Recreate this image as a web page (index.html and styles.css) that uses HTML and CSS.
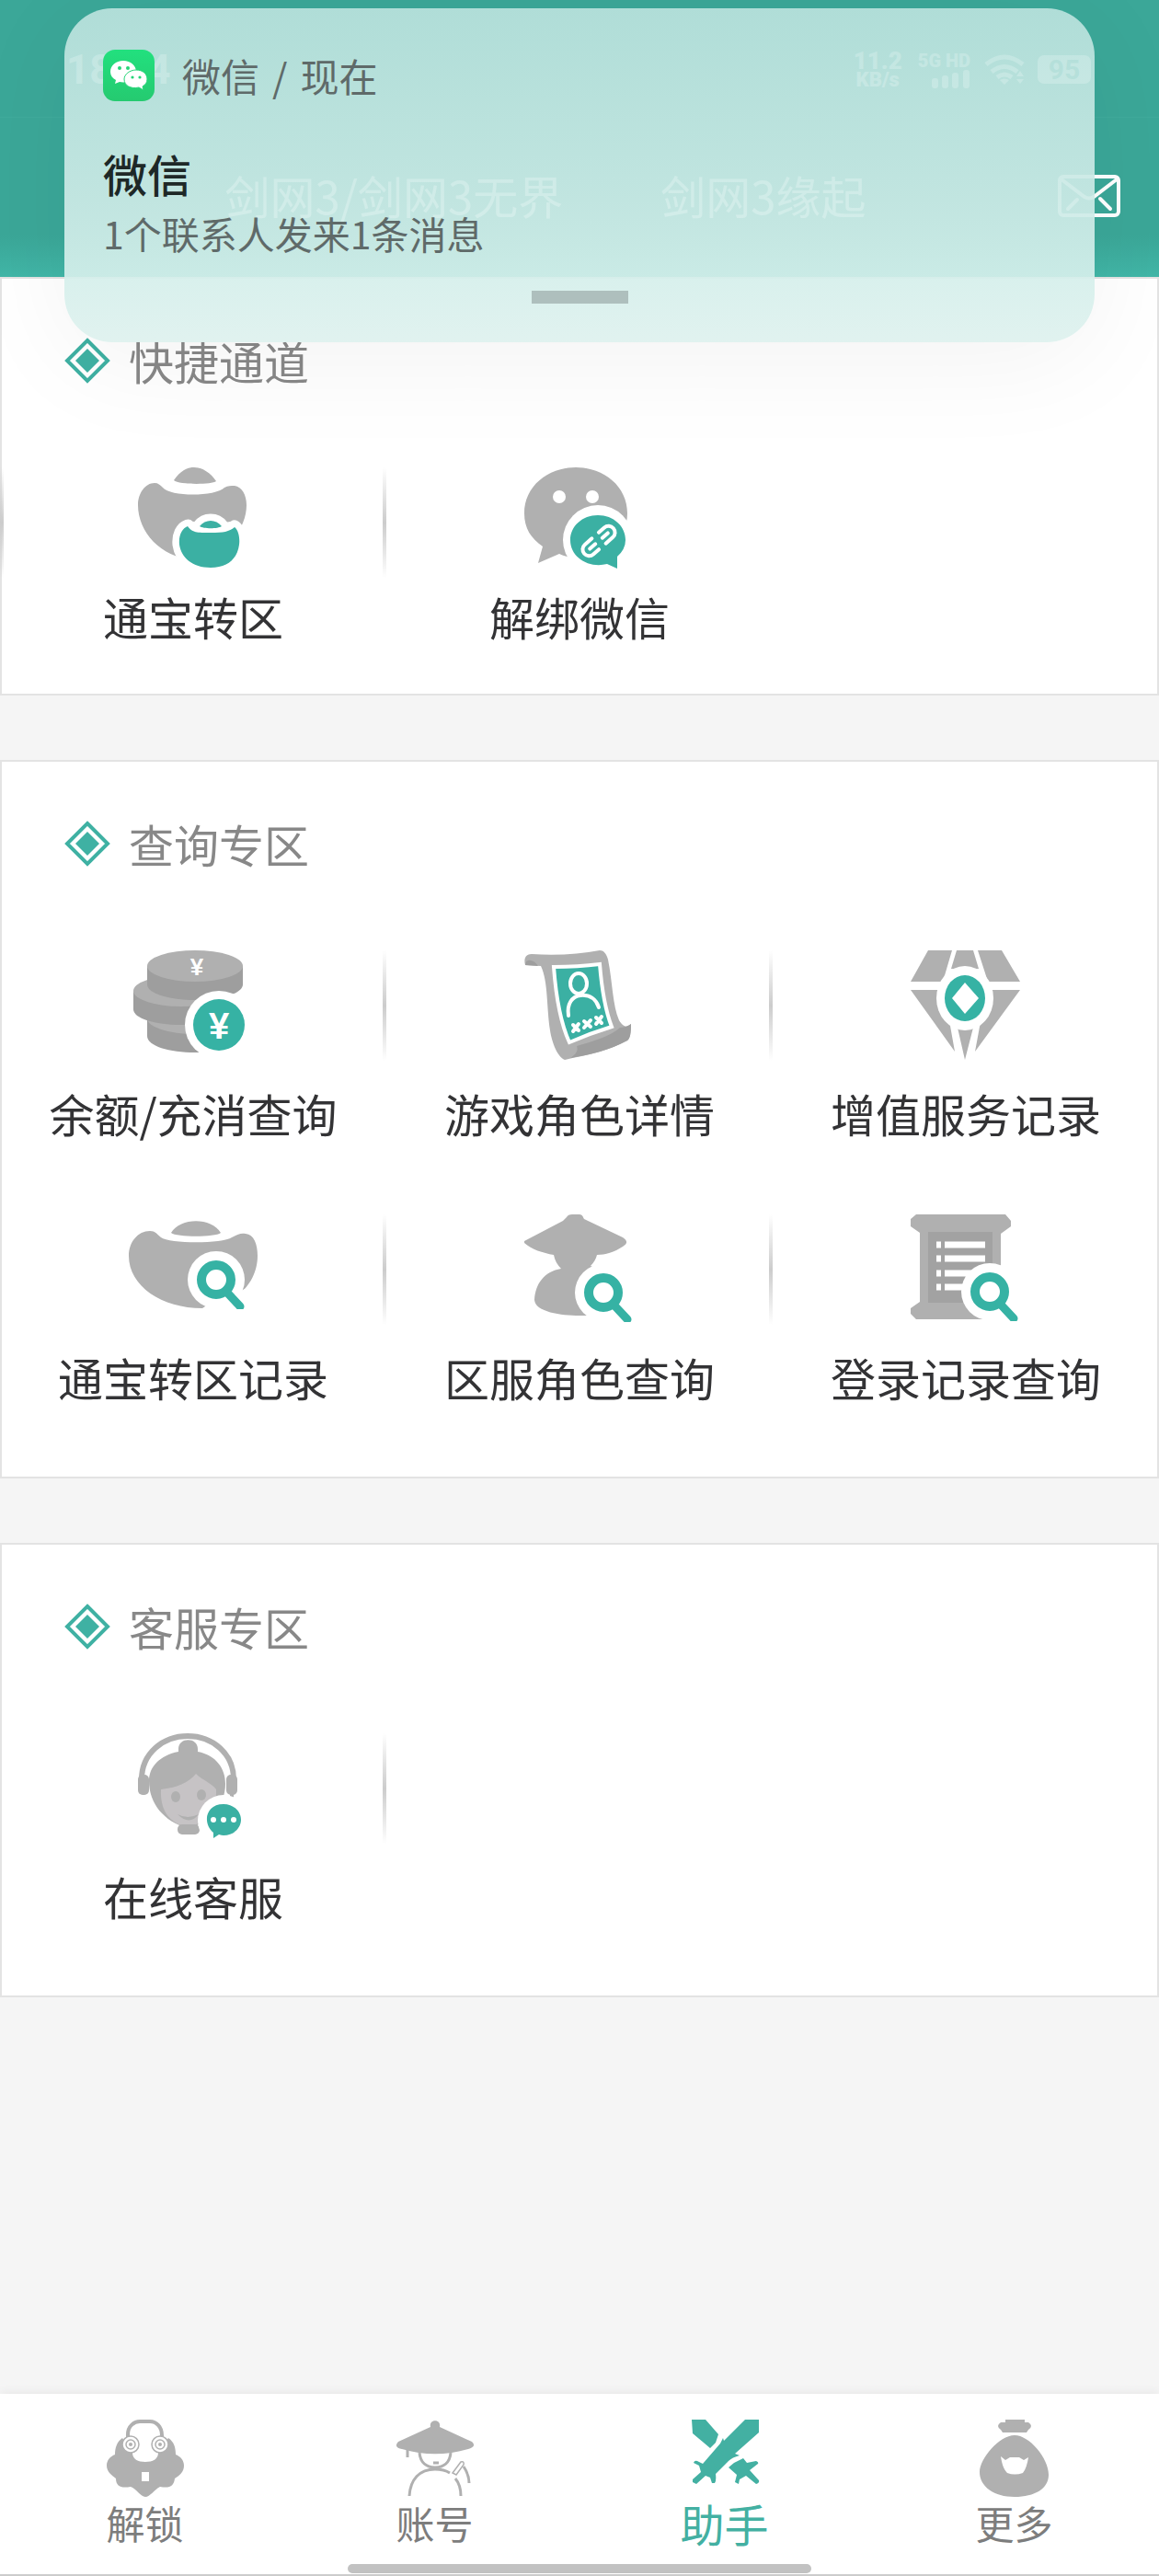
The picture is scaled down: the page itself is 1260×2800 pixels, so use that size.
FILE: index.html
```html
<!DOCTYPE html>
<html lang="zh-CN">
<head>
<meta charset="utf-8">
<meta name="viewport" content="width=device-width, initial-scale=1">
<title>助手</title>
<link rel="stylesheet" href="styles.css">
</head>
<body>
<svg class="defs" width="0" height="0" aria-hidden="true">
  <symbol id="bullet" viewBox="0 0 50 50">
    <path d="M25 3 47 25 25 47 3 25Z" fill="#fff" stroke="#3fb1a3" stroke-width="4"/>
    <path d="M25 12 38 25 25 38 12 25Z" fill="#3fb1a3"/>
  </symbol>
  <symbol id="magnifier" viewBox="0 0 64 64">
    <circle cx="32" cy="32" r="31" fill="#fff"/>
    <path d="M42 44 58 61" stroke="#fff" stroke-width="14"/>
    <circle cx="32" cy="32" r="16" fill="#fff" stroke="#36b2a4" stroke-width="10"/>
    <path d="M43 45 58 61" stroke="#36b2a4" stroke-width="9" stroke-linecap="round"/>
  </symbol>
</svg>

<header class="top">
  <div class="status">
    <span class="clock">18:04</span>
    <span class="status-dot"></span>
    <span class="speed"><b>11.2</b><b class="unit">KB/s</b></span>
    <span class="cell-net">
      <b>5G HD</b>
      <svg width="42" height="20" viewBox="0 0 42 20" fill="#fff"><rect x="0" y="9" width="7" height="11" rx="3"/><rect x="11" y="6" width="7" height="14" rx="3"/><rect x="22" y="3" width="7" height="17" rx="3"/><rect x="34" y="0" width="7" height="20" rx="3"/></svg>
    </span>
    <svg class="wifi" width="44" height="34" viewBox="0 0 44 34" fill="none" stroke="#fff" stroke-width="5"><path d="M2 11Q22-5 42 11M8 19Q22 8 36 19M14 25Q22 19 30 25"/><path d="M22 33 17 28Q22 25 27 28ZM39 18 43 24H35ZM39 32 43 27H35Z" fill="#fff" stroke="none"/></svg>
    <span class="battery">95</span>
  </div>
  <div class="bar">
    <nav class="tabs">
      <a class="tab current" href="#jx3">剑网3/剑网3无界</a>
      <a class="tab" href="#origin">剑网3缘起</a>
    </nav>
    <button class="mail" type="button" aria-label="消息">
      <svg width="68" height="46" viewBox="0 0 68 46" fill="none" stroke="#fff" stroke-width="4" stroke-linecap="round"><rect x="2" y="2" width="64" height="42" rx="4"/><path d="M4 5 29 24Q34 27 39 24L64 5M21 27 11 37M46 26 57 37"/></svg>
    </button>
  </div>
</header>

<aside class="notice">
  <div class="notice-app">
    <svg width="56" height="56" viewBox="0 0 56 56">
      <defs><linearGradient id="wx" x1="0" y1="0" x2="0" y2="1"><stop offset="0" stop-color="#22e07e"/><stop offset="1" stop-color="#25ca70"/></linearGradient></defs>
      <rect width="56" height="56" rx="13" fill="url(#wx)"/>
      <path d="M22 12C14 12 8 17 8 24C8 28 10 31 14 33L13 37 18 35C27 37 36 32 36 24C36 17 30 12 22 12Z" fill="#fff"/>
      <path d="M36 22C29 22 23 27 23 32C23 39 30 43 39 41L44 44 43 40C46 38 48 36 48 32C48 26 43 22 36 22Z" fill="#fff" stroke="#24d577"/>
      <g fill="#24d577"><circle cx="18" cy="20" r="2"/><circle cx="27" cy="20" r="2"/><circle cx="32" cy="30" r="1.6"/><circle cx="40" cy="30" r="1.6"/></g>
    </svg>
    <div class="source"><span>微信</span><span>/</span><span>现在</span></div>
  </div>
  <h2 class="notice-title">微信</h2>
  <p class="notice-text">1个联系人发来1条消息</p>
  <div class="handle"></div>
</aside>

<main>
  <section class="panel shortcuts">
    <h2 class="panel-title"><svg width="50" height="50"><use href="#bullet"/></svg>快捷通道</h2>
    <div class="grid">
      <a class="item" href="#transfer">
        <svg width="120" height="110" viewBox="0 0 120 110">
          <path fill="#b0b0b0" d="M39 14C46 4 53 0 61 0C70 0 79 6 85 15C80 19 44 19 39 14ZM18 17C22 17 24 19 27 22C35 32 84 32 94 22C98 20 101 20 105 20C113 21 118 30 118 41C118 70 90 100 59 100C25 98 0 70 0 41C0 28 8 17 18 17Z"/>
          <path fill="#fff" stroke="#fff" stroke-width="15" stroke-linejoin="round" d="M67 64C73 56 85 56 91 64ZM54 64C58 70 99 69 105 65C109 68 111 76 110 84C108 99 98 109 79 109C59 109 47 98 45 84C44 74 48 66 54 64Z"/>
          <path fill="#3bb0a3" d="M67 64C73 56 85 56 91 64C87 67 71 67 67 64ZM54 64C59 71 64 71 79 71C93 71 99 70 105 65C109 68 111 76 110 84C108 99 98 109 79 109C59 109 47 98 45 84C44 74 48 66 54 64Z"/>
        </svg>
        <span>通宝转区</span>
      </a>
      <a class="item" href="#unbind">
        <svg width="120" height="110" viewBox="0 0 120 110">
          <path fill="#b0b0b0" d="M56 0C87 0 112 21 112 50C112 78 87 98 56 98Q46 98 38 94L15 104 20 86C7 77 0 66 0 50C0 21 25 0 56 0Z"/>
          <circle cx="38" cy="32" r="7" fill="#fff"/><circle cx="74" cy="32" r="7" fill="#fff"/>
          <circle cx="80" cy="79" r="38" fill="#fff"/>
          <path fill="#3bb0a3" d="M80 52C97 52 110 64 110 79Q110 89 101 97L101 110 90 105C70 110 50 98 50 79C50 64 63 52 80 52Z"/>
          <g transform="translate(81 80) rotate(-41)" fill="none" stroke="#fff" stroke-width="4" stroke-linecap="round"><path d="M-4-7H-14A7 7 0 0 0-14 7H-6M4 7H14A7 7 0 0 0 14-7H6M-13 0H-5M5 0H13"/></g>
        </svg>
        <span>解绑微信</span>
      </a>
    </div>
  </section>

  <section class="panel">
    <h2 class="panel-title"><svg width="50" height="50"><use href="#bullet"/></svg>查询专区</h2>
    <div class="grid">
      <a class="item" href="#balance">
        <svg width="140" height="120" viewBox="0 0 140 120">
          <path fill="#9e9e9e" d="M20 74V93C20 104 44 111 72 111S124 104 124 93V74Z"/><ellipse cx="72" cy="74" rx="52" ry="17" fill="#b0b0b0"/>
          <path fill="#9e9e9e" d="M5 44V64C5 74 28 81 57 81S109 74 109 64V44Z"/><ellipse cx="57" cy="44" rx="52" ry="17" fill="#b0b0b0"/>
          <path fill="#9e9e9e" d="M20 17V37C20 47 44 54 72 54S124 47 124 37V17Z"/><ellipse cx="72" cy="17" rx="52" ry="17" fill="#b0b0b0"/>
          <circle cx="98" cy="81" r="37" fill="#fff"/><circle cx="98" cy="81" r="28" fill="#36b2a4"/>
          <text class="yen" x="74" y="27" font-size="26">¥</text><text class="yen" x="98" y="96" font-size="40">¥</text>
          <path fill="#fff" d="M74 118 100 109H130V118Z"/>
        </svg>
        <span>余额/充消查询</span>
      </a>
      <a class="item" href="#role">
        <svg width="140" height="120" viewBox="0 0 140 120">
          <path fill="#b0b0b0" d="M11 16C9 8 12 4 18 4C45 6 70 4 92 0C96 0 99 3 101 10C106 35 106 60 113 76C118 84 122 84 126 80C126 90 125 96 122 98C100 110 80 113 54 119C46 116 40 100 38 87C34 60 36 34 28 17Z"/>
          <path fill="#9e9e9e" d="M11 16C11 9 20 9 25 17ZM67 104C85 99 104 93 114 84Q120 84 126 80C126 90 125 96 122 98C102 109 82 113 60 117C66 113 69 109 67 104Z"/>
          <path fill="#3bb0a3" stroke="#fff" stroke-width="4" d="M42 18Q68 18 92 15C94 40 98 65 105 83Q82 90 59 100C48 76 44 45 42 18Z"/>
          <g fill="none" stroke="#fff" stroke-width="4" stroke-linecap="round"><ellipse cx="69" cy="36" rx="9" ry="11"/><path d="M58 71C56 58 62 50 71 49C81 48 88 53 91 62"/><path d="M63 81 69 87M69 80 63 88M75 77 82 83M82 76 75 84M88 73 94 79M94 72 88 80"/></g>
        </svg>
        <span>游戏角色详情</span>
      </a>
      <a class="item" href="#value-added">
        <svg width="140" height="120" viewBox="0 0 140 120">
          <path fill="#b0b0b0" d="M29 0H55L45 34H10ZM60 0H78L84 20H54ZM83 0H109L129 34H94ZM10 43H42L53 82 58 110ZM129 43H97L85 83 80 110ZM61 84H78L69 119Z"/>
          <ellipse cx="69" cy="52" rx="31" ry="35" fill="#fff"/><ellipse cx="69" cy="52" rx="22" ry="25" fill="#36b2a4"/>
          <path fill="#fff" d="M69 35 84 52 69 69 55 52Z"/>
        </svg>
        <span>增值服务记录</span>
      </a>
      <a class="item" href="#transfer-log">
        <svg width="140" height="120" viewBox="0 0 140 120">
          <path fill="#b0b0b0" d="M46 20C56 3 90 3 100 20C94 25 52 25 46 20ZM23 18C29 18 30 21 35 25C44 32 102 32 112 25C118 22 121 20 127 21C136 22 140 32 140 45C140 78 110 102 80 102C36 102 0 78 0 45C0 30 10 18 23 18Z"/>
          <path fill="#fff" d="M95 92 122 83 140 74V120H80V102Z"/>
          <use href="#magnifier" x="63" y="39" width="64" height="64"/>
        </svg>
        <span>通宝转区记录</span>
      </a>
      <a class="item" href="#server-role">
        <svg width="140" height="120" viewBox="0 0 140 120">
          <path fill="#b0b0b0" d="M56 3C57 1 59 0 62 0H70C73 0 74 3 75 5L117 25C123 29 122 32 117 35C108 41 98 44 89 44C88 48 86 52 82 56C96 60 90 75 90 110H70C50 110 22 106 21 93C22 75 32 62 50 59C46 55 43 50 42 44C30 42 18 38 10 31V29L52 7Z"/>
          <use href="#magnifier" x="64" y="53" width="64" height="64"/>
        </svg>
        <span>区服角色查询</span>
      </a>
      <a class="item" href="#login-log">
        <svg width="140" height="120" viewBox="0 0 140 120">
          <path fill="#b0b0b0" d="M16 0H113L119 7V13L108 21V95H102V114H16L10 108V102L20 95V20L10 13V5Z"/>
          <path fill="#a2a2a2" d="M29 19H99V96H29Z"/>
          <path stroke="#fff" stroke-width="7" d="M38 33H43M47 33H91M38 48H43M47 48H91M38 64H43M47 64H91M38 79H43M47 79H91"/>
          <use href="#magnifier" x="64" y="52" width="64" height="64"/>
        </svg>
        <span>登录记录查询</span>
      </a>
    </div>
  </section>

  <section class="panel">
    <h2 class="panel-title"><svg width="50" height="50"><use href="#bullet"/></svg>客服专区</h2>
    <div class="grid">
      <a class="item" href="#service">
        <svg width="140" height="120" viewBox="0 0 140 120">
          <path fill="none" stroke="#b0b0b0" stroke-width="6" d="M14 50C14 22 37 3 64 3S114 22 114 50"/>
          <rect x="10" y="45" width="12" height="22" rx="5" fill="#b0b0b0"/><rect x="106" y="45" width="12" height="22" rx="5" fill="#b0b0b0"/><path stroke="#b0b0b0" stroke-width="4" d="M112 64V71"/>
          <path fill="#b0b0b0" d="M54 20V17C54 4 75 4 75 17V20C95 24 105 38 105 55C105 78 88 99 64 103C38 96 22 76 22 52C22 36 34 24 54 20Z"/>
          <path fill="#c6c3c5" d="M35 61C52 59 65 54 73 44C80 51 90 54 95 61C96 80 86 98 64 102C44 98 34 84 35 61Z"/>
          <g fill="#b0b0b0"><ellipse cx="51" cy="69" rx="5" ry="6"/><ellipse cx="79" cy="67" rx="5" ry="6"/><path d="M53 88Q64 94 76 88Q66 101 53 88Z"/><rect x="53" y="99" width="24" height="11" rx="5"/></g>
          <circle cx="103" cy="95" r="28" fill="#fff"/>
          <path fill="#3bb0a3" d="M103 77C114 77 122 85 122 94S114 111 103 111Q101 111 98 110L92 114V108C80 98 83 77 103 77Z"/>
          <g fill="#fff"><circle cx="92" cy="94" r="3"/><circle cx="103" cy="94" r="3"/><circle cx="114" cy="94" r="3"/></g>
        </svg>
        <span>在线客服</span>
      </a>
    </div>
  </section>
</main>

<nav class="dock">
  <a href="#unlock">
    <svg width="84" height="84" viewBox="0 0 84 84">
      <path fill="none" stroke="#b0b0b0" stroke-width="4" d="M23 20V16C23 7 30 2 36 2H47C54 2 60 8 60 17V20"/>
      <path fill="#b0b0b0" d="M17 20C11 24 9 31 9 38C4 40 0 44 0 50C0 57 6 61 10 64C10 72 15 75 26 73C32 75 37 84 42 84C47 84 52 76 58 73C69 75 73 72 74 64C79 61 84 57 84 50C84 44 80 40 75 38C75 30 73 24 67 20L56 36C56 43 50 46 42 46C34 46 28 43 28 36Z"/>
      <g fill="#fff" stroke="#b0b0b0" stroke-width="1.5"><circle cx="26" cy="27" r="9"/><circle cx="58" cy="27" r="9"/><circle cx="26" cy="27" r="5"/><circle cx="58" cy="27" r="5"/></g>
      <g fill="#b0b0b0"><circle cx="26" cy="27" r="2"/><circle cx="58" cy="27" r="2"/></g>
      <path fill="#fff" d="M38 57H46V67H38Z"/>
    </svg>
    <span>解锁</span>
  </a>
  <a href="#account">
    <svg width="84" height="84" viewBox="0 0 84 84">
      <path fill="#b0b0b0" d="M37 8C35-1 49-1 47 8L82 24C86 28 84 30 78 32C54 39 30 39 6 32C0 31-2 28 2 24Z"/>
      <path fill="none" stroke="#b0b0b0" stroke-width="3" d="M12 33V41M25 36C26 47 33 52 42 52S58 47 59 36M40 47H46M14 83C15 65 25 54 42 54C50 54 55 56 58 58M64 64C69 70 70 76 70 83M73 51C77 57 79 62 79 69"/>
      <path fill="#fff" stroke="#b0b0b0" stroke-width="1.5" d="M61 58 70 46Q74 45 73 49L65 60Z"/>
    </svg>
    <span>账号</span>
  </a>
  <a class="active" href="#assistant">
    <svg width="84" height="84" viewBox="0 0 84 84" fill="#43b0a2">
      <path d="M6 0H21L35 16 32 25 26 31 7 15ZM64 0H79V14L53 37 58 39Q50 41 46 45L32 59Q33 66 31 69H28L26 63 21 61 11 70 7 68V65L16 57 14 50 8 47Q9 44 12 45L18 48 37 26 40 20 41 23ZM62 42 66 47 76 45Q79 46 78 48L69 55 79 66Q80 69 76 70L65 61 58 65 57 70 53 68 55 60 46 52 52 47Z"/>
    </svg>
    <span>助手</span>
  </a>
  <a href="#more">
    <svg width="84" height="84" viewBox="0 0 84 84">
      <path fill="#b0b0b0" d="M32 0H53V3H57Q63 7 57 11L55 14H29L27 11Q21 7 27 3H32ZM42 17C58 17 79 42 79 60C79 75 64 84 42 84S4 73 4 57C4 43 25 17 42 17Z"/>
      <path fill="#fff" d="M27 40 32 44 37 41H47L52 44 57 41C56 48 54 54 51 58Q42 61 34 58C30 54 28 47 27 40Z"/>
    </svg>
    <span>更多</span>
  </a>
  <div class="home"></div>
</nav>
</body>
</html>
```

FILE: styles.css
```css
* { box-sizing: border-box; }

body {
  position: relative;
  display: flex;
  flex-direction: column;
  min-height: 100vh;
  margin: 0;
  background: #f5f5f5;
  color: #333335;
  font-family: "Noto Sans CJK SC", sans-serif;
  font-size: 49px;
}

a { color: inherit; text-decoration: none; }
svg { display: block; flex: none; }
h2, p { margin: 0; font-weight: 400; }
.defs { position: absolute; }

/* header */
.top {
  background: linear-gradient(#3ba798, #3ba798 85%, #41b6a7);
  color: #fff;
}

.status {
  display: flex;
  align-items: center;
  height: 128px;
  padding: 52px 74px 28px 72px;
  border-bottom: 1px solid #40ab9c;
  font-family: Roboto, sans-serif;
  font-weight: 700;
}

.clock { font-size: 44px; }
.status-dot { width: 22px; height: 22px; margin: 0 auto 0 20px; border-radius: 50%; background: #fff; }
.speed { display: flex; flex-direction: column; align-items: center; font-size: 26px; line-height: 22px; }
.unit { font-size: 22px; line-height: 20px; }
.cell-net { display: flex; flex-direction: column; align-items: flex-end; margin-left: 17px; font-size: 20px; line-height: 20px; }
.wifi { margin-left: 15px; }
.battery {
  width: 58px;
  margin-left: 14px;
  border-radius: 7px;
  background: #fff;
  color: #3ba798;
  font-size: 30px;
  line-height: 31px;
  text-align: center;
}

.bar { display: flex; align-items: center; height: 173px; padding: 0 42px 4px 0; }
.tabs { display: flex; flex: 1; justify-content: center; gap: 106px; padding-left: 36px; }
.tab { display: flex; flex-direction: column; align-items: center; height: 110px; padding-top: 24px; line-height: 60px; }
.current::after { content: ""; width: 71px; height: 8px; margin-top: 35px; border-radius: 3px; background: #fff; }
.mail { padding: 0; border: 0; background: none; cursor: pointer; }

/* notification */
.notice {
  position: absolute;
  top: 9px;
  left: 70px;
  right: 70px;
  z-index: 1;
  padding: 45px 42px 42px;
  border-radius: 52px;
  background: linear-gradient(rgba(186, 226, 221, .92), rgba(204, 234, 230, .92) 56%, rgba(213, 239, 235, .92) 80%, rgba(222, 241, 238, .92));
  box-shadow: 0 20px 120px rgba(0, 0, 0, .05);
  color: #5f6a69;
  font-size: 41px;
}

.notice-app { display: flex; align-items: center; gap: 30px; line-height: 56px; }
.source { display: flex; gap: 14px; font-size: 42px; }
.notice-title { margin-top: 48px; color: #1e2827; font-size: 48px; font-weight: 500; line-height: 60px; }
.notice-text { margin-top: 7px; line-height: 56px; }
.handle { width: 105px; height: 14px; margin: 35px auto 0; background: #aebfbd; }

/* panels */
main { display: flex; flex: 1; flex-direction: column; gap: 70px; }
.panel { padding: 56px 0 74px; border: 2px solid #e3e3e3; background: #fff; }
.panel-title {
  display: flex;
  align-items: center;
  gap: 20px;
  margin-bottom: 83px;
  padding-left: 68px;
  color: #888;
  font-size: 49px;
  line-height: 66px;
}

.grid { display: grid; grid-template-columns: repeat(3, 1fr); row-gap: 76px; margin: 0 -2px; }
.item {
  display: flex;
  flex-direction: column;
  align-items: center;
  gap: 23px;
  line-height: 68px;
  background: linear-gradient(transparent, #ccc 50%, transparent) no-repeat right top / 4px 120px;
}
.item:nth-child(3n) { background: none; }

.shortcuts { padding-bottom: 50px; }
.shortcuts .item { gap: 18px; }
.shortcuts .item:first-child {
  background:
    linear-gradient(transparent, #ccc 50%, transparent) no-repeat left top / 4px 120px,
    linear-gradient(transparent, #ccc 50%, transparent) no-repeat right top / 4px 120px;
}
.shortcuts .item:last-child { background: none; }

.yen { fill: #fff; font-family: "Liberation Sans", sans-serif; font-weight: 700; text-anchor: middle; }

/* bottom navigation */
.dock {
  position: relative;
  display: grid;
  grid-template-columns: repeat(4, 1fr);
  padding: 28px 0 28px;
  border-bottom: 2px solid #ccc;
  background: #fff;
  box-shadow: 0 -2px 10px rgba(0, 0, 0, .06);
  color: #7d7d7d;
  font-size: 42px;
  line-height: 56px;
}
.dock a { display: flex; flex-direction: column; align-items: center; }
.dock .active { color: #43b0a2; font-size: 48px; }
.home {
  position: absolute;
  right: 30%;
  bottom: 1px;
  left: 30%;
  height: 10px;
  border-radius: 5px;
  background: #c2c2c2;
}
```
